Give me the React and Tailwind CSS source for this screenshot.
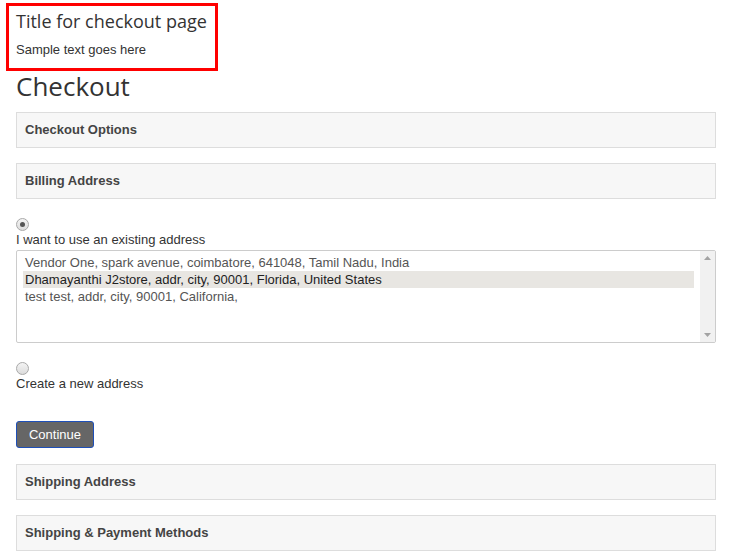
import React from 'react';

const Panel = ({ title }) => (
  <div className="h-[36px] border border-[#dddddd] bg-[#f7f7f7] px-[8px] flex items-center">
    <h4 className="text-[13px] font-bold text-[#444444]">{title}</h4>
  </div>
);

const Radio = ({ checked }) => (
  <span className="w-[13px] h-[13px] rounded-full border border-[#a9a9a9] bg-gradient-to-b from-[#f4f4f4] to-[#dcdcdc] flex items-center justify-center">
    {checked && <span className="block w-[5px] h-[5px] rounded-full bg-[#555555]"></span>}
  </span>
);

const addresses = [
  'Vendor One, spark avenue, coimbatore, 641048, Tamil Nadu, India',
  'Dhamayanthi J2store, addr, city, 90001, Florida, United States',
  'test test, addr, city, 90001, California,',
];

export default function App() {
  return (
    <div className="w-[729px] h-[560px] bg-white pl-4 pr-[13px] pt-[3px] font-['Liberation_Sans',Arial,sans-serif] text-[13px] text-[#333333]">

      {/* custom module box */}
      <div className="-ml-[10px] w-[212px] h-[68px] border-[3px] border-[#ff0000] pl-[7px] pt-[2px]">
        <h3 className="font-['Open_Sans',sans-serif] font-medium text-[18px] leading-[26px] whitespace-nowrap text-[#333333]">Title for checkout page</h3>
        <p className="mt-[7px] text-[13px] leading-[18px] text-[#333333]">Sample text goes here</p>
      </div>

      <h1 className="font-['Open_Sans',sans-serif] font-medium text-[26px] leading-[28px] text-[#333333] mt-[1px] mb-[12px]">Checkout</h1>

      <div className="flex flex-col gap-[15px]">
        <Panel title="Checkout Options" />
        <Panel title="Billing Address" />
      </div>

      {/* existing address */}
      <div className="mt-[19px]">
        <Radio checked />
      </div>
      <label className="block leading-[18px]">I want to use an existing address</label>

      <div className="mt-[1px] h-[93px] border border-[#cccccc] rounded-[2px] flex overflow-hidden">
        <div className="flex-1 pt-[3px] pl-[6px] pr-[6px]">
          {addresses.map((a, i) => (
            <div
              key={i}
              className={`h-[17px] leading-[17px] pl-[2px] whitespace-nowrap ${i === 1 ? 'bg-[#e8e6e2] text-[#222222]' : 'text-[#555555]'}`}
            >
              {a}
            </div>
          ))}
        </div>
        <div className="w-[15px] bg-[#f1f1f1] flex flex-col items-center justify-between py-[5px]">
          <svg width="7" height="4" viewBox="0 0 7 4"><path d="M0 4 L3.5 0 L7 4 Z" fill="#a3a3a3" /></svg>
          <svg width="7" height="4" viewBox="0 0 7 4"><path d="M0 0 L3.5 4 L7 0 Z" fill="#a3a3a3" /></svg>
        </div>
      </div>

      {/* new address */}
      <div className="mt-[19px]">
        <Radio />
      </div>
      <label className="block leading-[18px]">Create a new address</label>

      <button className="mt-[28px] w-[78px] h-[27px] rounded-[3px] border border-[#1e4fb8] bg-[#666666] text-white text-[13px] block">
        Continue
      </button>

      <div className="mt-[16px] flex flex-col gap-[15px]">
        <Panel title="Shipping Address" />
        <Panel title="Shipping & Payment Methods" />
      </div>
    </div>
  );
}
